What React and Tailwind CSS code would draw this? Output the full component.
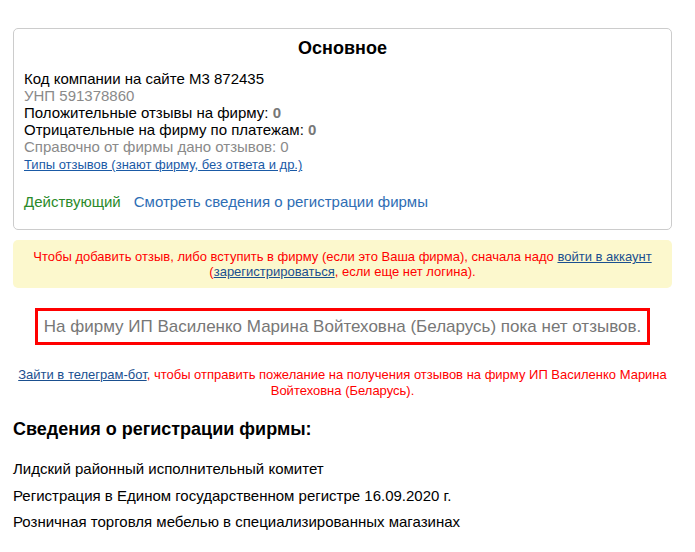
export default function App() {
  return (
    <div className="min-h-screen bg-white pt-[28px] pl-[13px] pr-[23px] text-black" style={{ fontFamily: '"Liberation Sans", Arial, sans-serif' }}>
      {/* Основное */}
      <div className="rounded-[5px] border border-[#cccccc] px-[10px] pt-[9px] pb-[18px]">
        <h2 className="text-center text-[18px] leading-[21px] font-bold">Основное</h2>
        <div className="mt-[11px] text-[15px] leading-[17px]">
          <div>Код компании на сайте М3 872435</div>
          <div className="text-[#8a8a8a]">УНП 591378860</div>
          <div>Положительные отзывы на фирму: <b className="text-[#777777]">0</b></div>
          <div>Отрицательные на фирму по платежам: <b className="text-[#777777]">0</b></div>
          <div className="text-[#8a8a8a]">Справочно от фирмы дано отзывов: 0</div>
          <a href="#" className="text-[13px] leading-[17px] text-[#1a5aa6] underline">Типы отзывов (знают фирму, без ответа и др.)</a>
        </div>
        <div className="mt-[20px] text-[15px] leading-[18px] flex gap-[13px]">
          <span className="text-[#2a8a2a]">Действующий</span>
          <a href="#" className="text-[#2e6db4]">Смотреть сведения о регистрации фирмы</a>
        </div>
      </div>

      {/* Уведомление */}
      <div className="mt-[10px] rounded-[5px] bg-[#fcf8cd] py-[9px] px-[10px] text-center text-[13px] leading-[15px] text-[#ff0000]">
        Чтобы добавить отзыв, либо вступить в фирму (если это Ваша фирма), сначала надо{' '}
        <a href="#" className="text-[#1a4f8f] underline">войти в аккаунт</a>
        <br />(<a href="#" className="text-[#1a4f8f] underline">зарегистрироваться</a>, если еще нет логина).
      </div>

      {/* Нет отзывов */}
      <div className="mt-[20px] flex justify-center">
        <div className="border-[3px] border-[#ff0000] px-[6px] py-[6px] text-[17px] leading-[19px] text-[#777777]">
          На фирму ИП Василенко Марина Войтеховна (Беларусь) пока нет отзывов.
        </div>
      </div>

      <div className="mt-[22px] text-center text-[13px] leading-[16px] text-[#ff0000] px-[2px]">
        <a href="#" className="text-[#1a4f8f] underline">Зайти в телеграм-бот</a>, чтобы отправить пожелание на получения отзывов на фирму ИП Василенко Марина Войтеховна (Беларусь).
      </div>

      {/* Сведения */}
      <h2 className="mt-[19px] text-[18px] leading-[22px] font-bold">Сведения о регистрации фирмы:</h2>
      <div className="mt-[20px] text-[15px] leading-[17px] flex flex-col gap-[9.5px]">
        <div>Лидский районный исполнительный комитет</div>
        <div>Регистрация в Едином государственном регистре 16.09.2020 г.</div>
        <div>Розничная торговля мебелью в специализированных магазинах</div>
      </div>
    </div>
  );
}
